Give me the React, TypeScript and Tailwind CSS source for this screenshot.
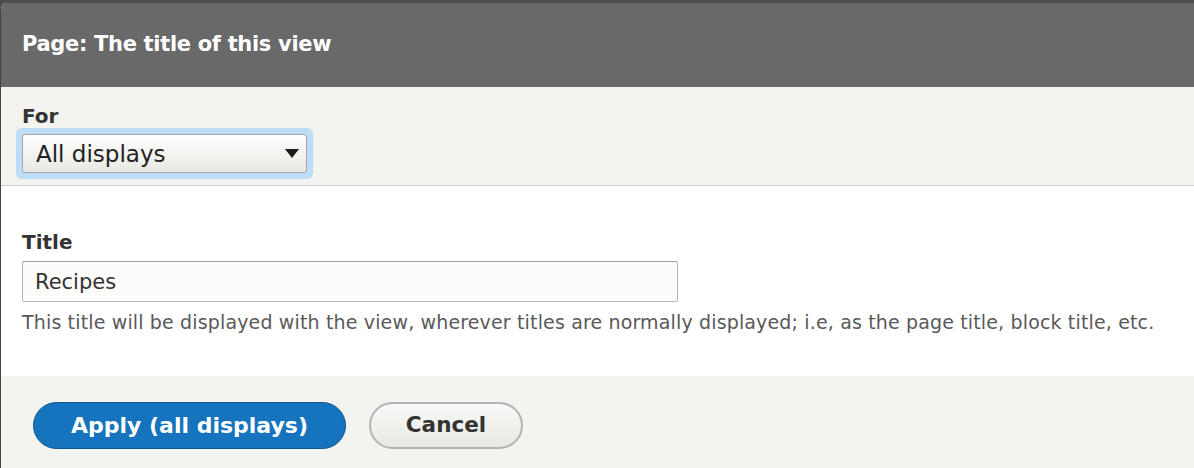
import React from "react";

const font = { fontFamily: '"DejaVu Sans", "Lucida Grande", sans-serif' };

export default function App() {
  return (
    <div className="w-[1194px] h-[468px] overflow-hidden bg-[#4d4d4d] pt-[3px]" style={font}>
      <div className="flex flex-col h-[465px] bg-white rounded-tl-[6px] border-l border-[#444] overflow-hidden">
        {/* Header */}
        <div className="h-[84px] shrink-0 bg-[#696969] flex items-center pl-[21px]">
          <h1 className="text-[21px] font-bold text-white tracking-[-0.32px]">Page: The title of this view</h1>
        </div>

        {/* For section */}
        <div className="h-[99px] shrink-0 bg-[#f3f3ef] border-b border-[#cfcfcb] pl-[21px] pt-[18px]">
          <label className="block text-[20px] font-bold text-[#333] leading-[23px]">For</label>
          <div className="w-[297px] h-[51px] -ml-[6px] rounded-[6px] bg-[#bddcf5] p-[6px]">
            <div className="h-[39px] rounded-[3px] border border-[#a6a6a6] bg-gradient-to-b from-[#fefefe] to-[#e8e8e3] flex items-center justify-between pl-[13px] pr-[7px]">
              <span className="text-[23px] text-[#222] leading-[28px]">All displays</span>
              <svg width="14" height="9" viewBox="0 0 14 9">
                <path d="M0 0 L14 0 L7 9 Z" fill="#1a1a1a" />
              </svg>
            </div>
          </div>
        </div>

        {/* Title section */}
        <div className="h-[190px] shrink-0 bg-white pl-[21px] pt-[45px]">
          <label className="block text-[20px] font-bold text-[#333] leading-[23px]">Title</label>
          <div className="mt-[7px] w-[656px] h-[41px] rounded-[2px] border border-[#b5b5b5] border-t-[#9f9f9f] bg-[#fcfcfa] flex items-center pl-[12px]">
            <span className="text-[21px] text-[#333] leading-[26px]">Recipes</span>
          </div>
          <p className="mt-[9px] text-[19px] text-[#595959] leading-[22px] tracking-[0.15px] whitespace-nowrap">
            This title will be displayed with the view, wherever titles are normally displayed; i.e, as the page title, block title, etc.
          </p>
        </div>

        {/* Footer */}
        <div className="flex-1 bg-[#f3f3ef] flex items-start gap-[23px] pl-[32px] pt-[26px]">
          <button className="w-[313px] h-[47px] rounded-full bg-[#1574bd] border border-[#0e568f] text-white text-[22px] font-bold">
            Apply (all displays)
          </button>
          <button className="w-[154px] h-[47px] rounded-full bg-gradient-to-b from-[#f8f8f6] to-[#e8e8e4] border-2 border-[#b3b3b3] text-[#333] text-[21.5px] font-bold">
            Cancel
          </button>
        </div>
      </div>
    </div>
  );
}
